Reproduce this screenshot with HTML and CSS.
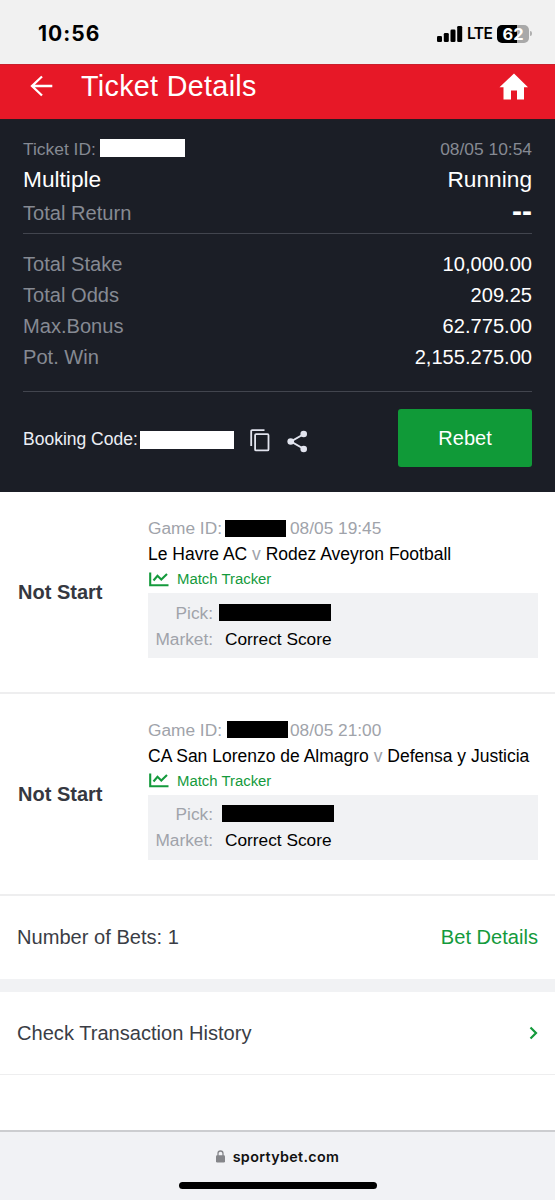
FILE: index.html
```
<!DOCTYPE html>
<html lang="en">
<head>
<meta charset="utf-8">
<title>Ticket Details</title>
<link rel="stylesheet" href="styles.css">
</head>
<body>
<div class="status">
  <span class="clock">10:56</span>
  <div class="status-right">
    <svg class="signal" width="26" height="16" viewBox="0 0 26 16"><rect x="0" y="10" width="5" height="6" rx="1.3"/><rect x="6.8" y="7" width="5" height="9" rx="1.3"/><rect x="13.5" y="3.5" width="5" height="12.5" rx="1.3"/><rect x="20.2" y="0" width="5" height="16" rx="1.3"/></svg>
    <span class="lte">LTE</span>
    <div class="battery">62</div>
    <i class="battery-tip"></i>
  </div>
</div>
<header class="header">
  <svg class="back" width="24" height="22" viewBox="0 0 24 22"><path d="M22.3 11H2.3M12 1.5L2 11l10 9.5" fill="none" stroke="#fff" stroke-width="2.3"/></svg>
  <h1 class="title">Ticket Details</h1>
  <svg class="home" width="30" height="27" viewBox="0 0 30 27"><path d="M15 .5L29 14.2H25V26.5H18V17.500H12V26.500H4.500V14.200H.500Z" fill="#fff"/></svg>
</header>
<section class="ticket">
  <div class="line small muted"><span class="with-mask">Ticket ID: <i class="mask mask-ticket"></i></span><span>08/05 10:54</span></div>
  <div class="line large"><span>Multiple</span><span>Running</span></div>
  <div class="line total"><span class="muted">Total Return</span><b class="dashes">--</b></div>
  <div class="sums">
    <div class="line sum"><span class="muted">Total Stake</span><span>10,000.00</span></div>
    <div class="line sum"><span class="muted">Total Odds</span><span>209.25</span></div>
    <div class="line sum"><span class="muted">Max.Bonus</span><span>62.775.00</span></div>
    <div class="line sum"><span class="muted">Pot. Win</span><span>2,155.275.00</span></div>
  </div>
  <div class="booking">
    <span class="code">Booking Code:</span><i class="mask mask-code"></i>
    <svg class="copy" width="20" height="23" viewBox="0 0 20 23"><g fill="none" stroke="#e2e4ee" stroke-width="1.8"><path d="M1.200 17V2.200a1 1 0 0 1 1-1H14.500"/><rect x="5.100" y="5.200" width="13.400" height="16.200" rx="1"/></g></svg>
    <svg class="share" width="21" height="23" viewBox="0 0 21 23"><path d="M17 4L4 11.500 17 19" fill="none" stroke="#e2e4ee" stroke-width="2"/><g fill="#e2e4ee"><circle cx="16.700" cy="4" r="3.300"/><circle cx="3.700" cy="11.500" r="3.300"/><circle cx="16.700" cy="19" r="3.300"/></g></svg>
    <button class="rebet">Rebet</button>
  </div>
</section>
<section class="game">
  <div class="state">Not Start</div>
  <div class="info">
    <div class="game-id"><span class="gid">Game ID:</span><i class="mask-dark"></i><span>08/05 19:45</span></div>
    <div class="teams">Le Havre AC <span class="v">v</span> Rodez Aveyron Football</div>
    <div class="tracker"><svg width="20" height="15" viewBox="0 0 20 15"><path d="M1.200 .5V13.200H19.500M4.500 8.500L8.500 3.800 12.300 7.500 18 2" fill="none" stroke="#149a3c" stroke-width="2.1"/></svg>Match Tracker</div>
    <div class="bet">
      <div class="pick"><span class="label">Pick:</span><i class="mask-pick"></i></div>
      <div class="market"><span class="label">Market:</span><span>Correct Score</span></div>
    </div>
  </div>
</section>
<section class="game second">
  <div class="state">Not Start</div>
  <div class="info">
    <div class="game-id"><span class="gid">Game ID:</span><i class="mask-dark"></i><span>08/05 21:00</span></div>
    <div class="teams">CA San Lorenzo de Almagro <span class="v">v</span> Defensa y Justicia</div>
    <div class="tracker"><svg width="20" height="15" viewBox="0 0 20 15"><path d="M1.200 .5V13.200H19.500M4.500 8.500L8.500 3.800 12.300 7.500 18 2" fill="none" stroke="#149a3c" stroke-width="2.1"/></svg>Match Tracker</div>
    <div class="bet">
      <div class="pick"><span class="label">Pick:</span><i class="mask-pick"></i></div>
      <div class="market"><span class="label">Market:</span><span>Correct Score</span></div>
    </div>
  </div>
</section>
<div class="row bets"><span>Number of Bets: 1</span><span class="green">Bet Details</span></div>
<div class="row history"><span>Check Transaction History</span><svg width="9" height="14" viewBox="0 0 9 14"><path d="M1.500 1.500L7 7l-5.500 5.500" fill="none" stroke="#149a3c" stroke-width="2.200"/></svg></div>
<footer class="browser">
  <div class="url"><svg width="9" height="13" viewBox="0 0 9 13"><path d="M2 6V3.500a2.500 2.500 0 0 1 5 0V6" fill="none" stroke="#85868a" stroke-width="1.300"/><rect x="0" y="5.300" width="9" height="7.200" rx="1.200" fill="#85868a"/></svg>sportybet.com</div>
  <div class="indicator"></div>
</footer>
</body>
</html>
```
FILE: styles.css
```
* { box-sizing: border-box; }
body { margin: 0; width: 555px; height: 1200px; overflow: hidden; display: flex; flex-direction: column; background: #fff; font-family: "Liberation Sans", Arial, sans-serif; white-space: nowrap; }
svg, i { display: block; flex: none; }

.status { height: 64px; flex: none; padding: 3px 23px 0 38px; background: #f1f1f1; display: flex; align-items: center; justify-content: space-between; font-family: Inter, sans-serif; color: #000; }
.clock { font-size: 21px; font-weight: 700; letter-spacing: 1px; }
.status-right { display: flex; align-items: center; }
.lte { margin-left: 4px; width: 26px; font-size: 15.5px; font-weight: 600; letter-spacing: -.5px; }
.battery { margin-left: 4px; width: 32px; height: 18px; border-radius: 5px; background: linear-gradient(90deg, #000 62%, #a9a9a9 62%); color: #fff; font-size: 16.5px; line-height: 18px; font-weight: 700; text-align: center; }
.battery-tip { width: 2px; height: 5px; margin-left: 1px; border-radius: 0 2px 2px 0; background: #b0b0b0; }

.header { height: 55px; flex: none; padding: 0 26px 13px 30px; display: flex; align-items: center; background: #e71827; border-top: 1px solid #c9202d; color: #fff; }
.title { margin: 0 auto 0 27px; font-size: 28.7px; font-weight: 400; line-height: 40px; letter-spacing: .33px; }
.home { margin-top: 2px; }

.ticket { height: 373px; flex: none; padding: 15px 23px 0; background: #1b1e26; color: #fff; border-top: 1px solid #261c22; }
.line { display: flex; justify-content: space-between; align-items: center; }
.muted { color: #868a93; }
.small { height: 28px; font-size: 17.4px; }
.with-mask { display: flex; align-items: center; }
.mask { background: #fff; height: 18px; }
.mask-ticket { width: 85px; margin: -3px 0 0 4px; }
.large { height: 33px; font-size: 22.7px; }
.total { height: 38px; padding-bottom: 3px; font-size: 20.1px; border-bottom: 1px solid #42454e; }
.dashes { font-size: 30px; line-height: 20px; margin-top: -5px; }
.sums { height: 158px; padding-top: 15.5px; border-bottom: 1px solid #42454e; }
.sum { height: 30.8px; font-size: 20.1px; }
.booking { margin-top: 17px; height: 59px; display: flex; align-items: center; color: #eceef5; }
.code { width: 117px; margin-top: 2px; font-size: 17.5px; }
.mask-code { width: 94px; margin-top: 3px; }
.copy { margin: 4px 0 0 16px; }
.share { margin: 5px auto 0 17px; }
.rebet { width: 134px; height: 58px; margin-top: -1px; padding: 0; border: 0; border-radius: 3px; background: #109a38; color: #fff; font: 20px "Liberation Sans", Arial, sans-serif; }

.game { height: 202px; flex: none; padding: 24px 17px 0 18px; display: grid; grid-template-columns: 130px 390px; border-bottom: 2px solid #eeeeef; color: #000; font-size: 17.3px; }
.state { padding-top: 62px; font-size: 20px; line-height: 28px; font-weight: 700; color: #353840; }
.game-id { height: 25px; display: flex; align-items: center; color: #a0a3aa; }
.gid { width: 77px; }
.mask-dark { width: 61px; height: 17px; background: #000; margin: -1px 4px 0 0; }
.teams { height: 26px; line-height: 26px; font-size: 17.5px; }
.v { color: #a0a3aa; }
.tracker { height: 26px; display: flex; align-items: center; gap: 8px; padding: 0 0 2px 1px; font-size: 14.9px; color: #149a3c; }
.bet { height: 65px; padding: 7px 0 0 7px; background: #f1f2f4; }
.pick, .market { height: 26px; display: flex; align-items: center; }
.label { width: 58px; margin-right: 12px; text-align: right; color: #a0a3aa; }
.mask-pick { width: 112px; height: 17px; margin: -1px 0 0 -6px; background: #000; }
.second .mask-dark { margin: -3px 2px 0 2px; }
.second .mask-pick { margin: -1px 0 0 -3px; }
.second .bet { padding-top: 6px; }
.second .tracker { padding-bottom: 3px; }

.row { flex: none; display: flex; align-items: center; justify-content: space-between; padding: 0 17px; font-size: 20.1px; color: #3a3d45; }
.bets { height: 96px; border-bottom: 13px solid #f1f2f4; }
.green { color: #149a3c; }
.history { height: 83px; border-bottom: 1px solid #eeeeef; }
.browser { height: 70px; flex: none; margin-top: auto; padding-top: 11px; display: flex; flex-direction: column; align-items: center; gap: 13px; background: #f1f2f5; border-top: 2px solid #cccdd0; }
.url { height: 26px; display: flex; align-items: center; gap: 8px; font: 600 14.3px Inter, sans-serif; letter-spacing: .35px; color: #111; }
.indicator { width: 198px; height: 7px; border-radius: 4px; background: #000; }
```
